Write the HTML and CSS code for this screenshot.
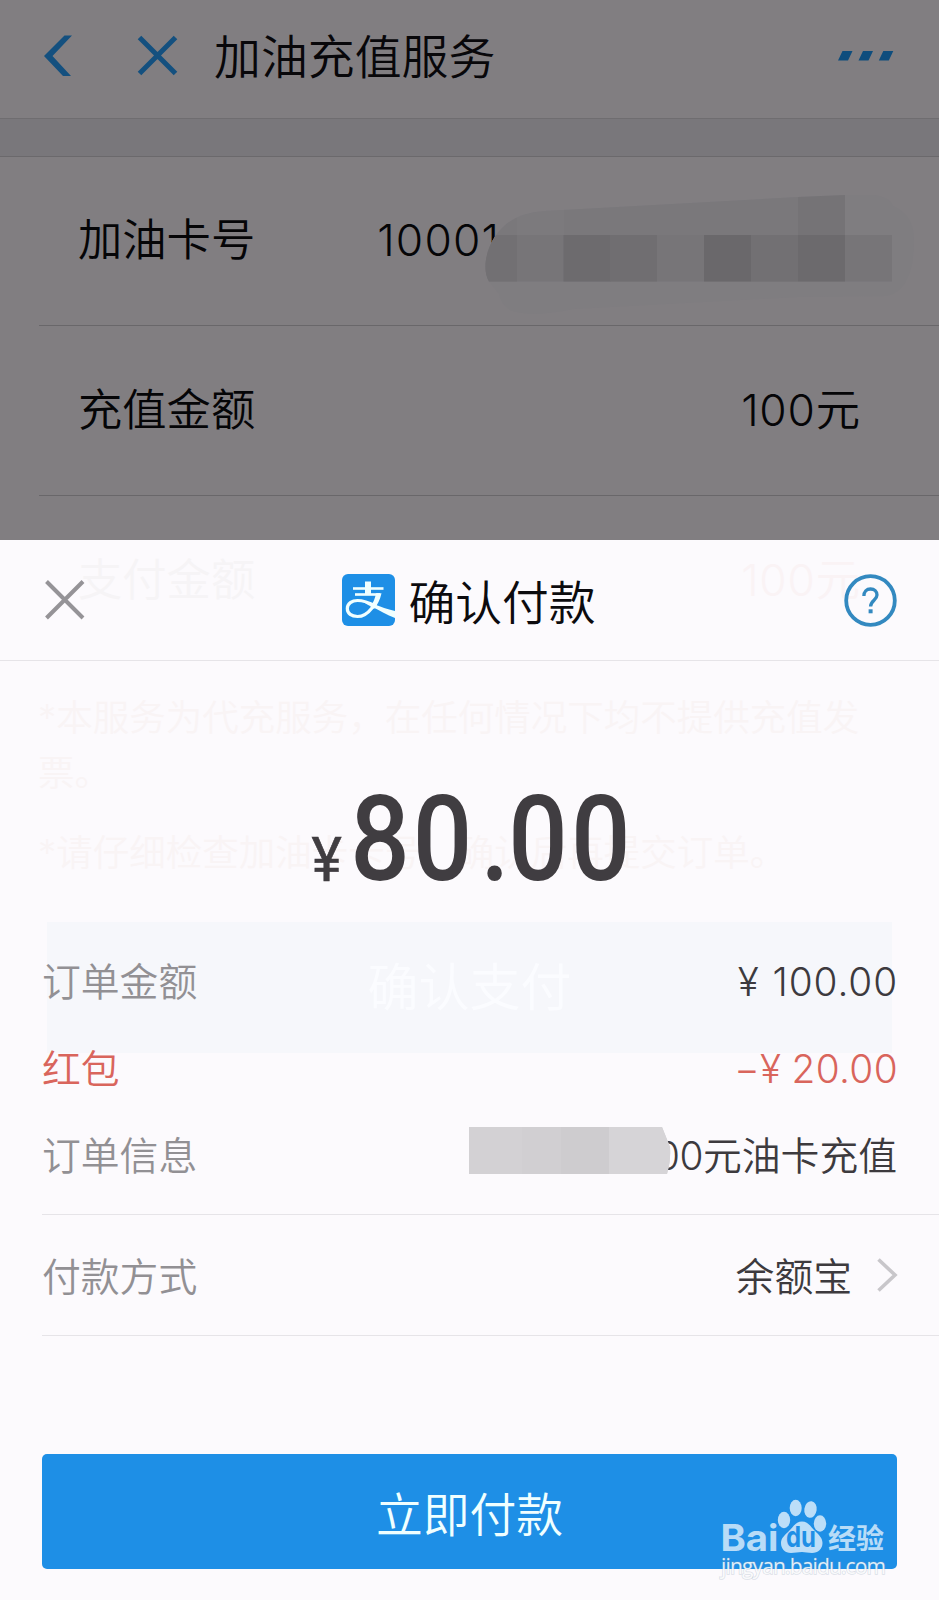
FILE: index.html
```html
<!DOCTYPE html>
<html lang="zh-CN">
<head>
<meta charset="utf-8">
<title>加油充值服务</title>
<link rel="stylesheet" href="styles.css">
</head>
<body>
<div class="screen">
  <div class="page">
    <header class="navbar">
      <svg class="back" width="30" height="42" viewBox="0 0 30 42"><path d="M20.500 .5H28L8.500 21L27 41H19L0 21Z"/></svg>
      <svg class="close" width="42" height="42" viewBox="0 0 42 42"><path d="M2.500 2.500L38.500 38.500M38.500 2.500L2.500 38.500"/></svg>
      <h1 class="title">加油充值服务</h1>
      <svg class="more" width="56" height="10" viewBox="0 0 56 10"><path d="M4.500 0h10l-4.500 9.500H0zM25 0h10l-4.500 9.500h-10zM45.300 0h10l-4.500 9.500h-10z"/></svg>
    </header>
    <div class="band"></div>
    <div class="field">
      <span>加油卡号</span>
      <span class="card-no">10001</span>
      <svg class="mosaic-card" width="450" height="150" viewBox="470 180 450 150">
        <clipPath id="blob"><path d="M489 281.500C481 268 487 243 502 228Q516 213 545 211L798 197L845 195L873 195Q890 197 893 206Q914 215 914 240Q914 290 887 296L798 297L574 309Q530 318 510 310Q500 303 499 294Z"/></clipPath>
        <g clip-path="url(#blob)">
          <rect x="470" y="180" width="450" height="150" fill="#7f7d80"/>
          <rect x="470" y="180" width="47" height="55" fill="#7a787b"/>
          <rect x="517" y="180" width="47" height="55" fill="#7c7a7d"/>
          <rect x="564" y="180" width="234" height="55" fill="#7a787b"/>
          <rect x="798" y="180" width="47" height="55" fill="#757376"/>
          <rect x="470" y="235" width="422" height="46.500" fill="#777578"/>
          <rect x="470" y="235" width="47" height="46.500" fill="#727073"/>
          <rect x="563.500" y="235" width="47" height="46.500" fill="#6d6b6e"/>
          <rect x="610" y="235" width="47" height="46.500" fill="#706e71"/>
          <rect x="704" y="235" width="47" height="46.500" fill="#6a686b"/>
          <rect x="751" y="235" width="47" height="46.500" fill="#727073"/>
          <rect x="798" y="235" width="47" height="46.500" fill="#6c6a6d"/>
        </g>
      </svg>
    </div>
    <div class="field">
      <span>充值金额</span>
      <span class="value"><span class="num">100</span>元</span>
    </div>
  </div>

  <section class="sheet">
    <div class="under">
      <div class="under-row"><span>支付金额</span><span class="under-sum"><span class="num">100</span>元</span></div>
      <p class="under-note">*本服务为代充服务，在任何情况下均不提供充值发<br>票。</p>
      <p class="under-note">*请仔细检查加油卡卡号，确认后再提交订单。</p>
      <div class="under-button">确认支付</div>
    </div>

    <header class="sheet-head">
      <svg width="42" height="42" viewBox="0 0 42 42"><path d="M2.500 2.500L39 39M39 2.500L2.500 39" fill="none" stroke="#959397" stroke-width="4"/></svg>
      <div class="brand">
        <svg width="53" height="52" viewBox="0 0 53 52">
          <rect width="53" height="52" rx="6" fill="#1e8fe6"/>
          <g fill="none" stroke="#f0ffff">
            <path d="M11 14.500H41.500" stroke-width="2.600"/>
            <path d="M26 7.500V20" stroke-width="6"/>
            <path d="M13 20.500H38" stroke-width="2.600"/>
            <path d="M36.500 19.500C35 28 27 42.500 15.500 42.500C9.500 42.500 5.300 39.500 5.300 34.500C5.300 29.500 10 26.500 15.500 26.500C21 26.500 28 29 34 32" stroke-width="3.200"/>
          </g>
          <path d="M19 26C28 28 37 33 53 37V44C45 41 37 36 29 32.500C25 30.500 22 28.500 19 26Z" fill="#f0ffff"/>
          <path d="M34 19.300H39.500C38 26 35.500 31 32 35L28.500 32.500C31.500 28.500 33 24.500 34 19.300Z" fill="#f0ffff"/>
        </svg>
        <h2>确认付款</h2>
      </div>
      <svg width="53" height="53" viewBox="0 0 53 53" fill="none" stroke="#3389c0">
        <circle cx="26.500" cy="26.500" r="24.300" stroke-width="3.800"/>
        <path d="M19.900 22C19.900 17.500 22.600 15 26.500 15C30.500 15 33 17.500 33 21C33 26 26.600 26.500 26.600 32.500" stroke-width="3.300"/>
        <path d="M26.600 35.300V39.300" stroke-width="4"/>
      </svg>
    </header>

    <div class="amount">
      <svg width="320" height="110" viewBox="310 780 320 110" fill="#403d41">
        <text class="yen" transform="translate(311.500 880.500) scale(.93 1)">¥</text>
        <g transform="scale(.88 1)"><text class="sum" x="398 469 546 577.500 649" y="880">80.00</text></g>
      </svg>
    </div>

    <dl class="details">
      <div class="line"><dt>订单金额</dt><dd class="num">¥ 100.00</dd></div>
      <div class="line discount"><dt>红包</dt><dd class="num">−¥ 20.00</dd></div>
      <div class="line">
        <dt>订单信息</dt><dd><span class="tight">00</span>元油卡充值</dd>
        <svg class="mosaic-order" width="202" height="47" viewBox="0 0 202 47">
          <path d="M0 0H193L201 20Q202 34 198 47H0Z" fill="#d3d1d4"/>
          <path d="M53 0H92V47H53Z" fill="#d1cfd2"/>
          <path d="M92 0H140V47H92Z" fill="#cecccf"/>
          <path d="M140 0H193L201 20Q202 34 198 47H140Z" fill="#d6d4d7"/>
        </svg>
      </div>
    </dl>

    <div class="method">
      <span class="method-label">付款方式</span>
      <span class="method-value">余额宝</span>
      <svg width="21" height="34" viewBox="0 0 21 34"><path d="M1.500 1.500L18 17L1.500 32.500" fill="none" stroke="#c8c6ca" stroke-width="3.600"/></svg>
    </div>

    <button class="pay">立即付款</button>

    <svg class="watermark" width="180" height="90" viewBox="715 1495 180 90">
      <g fill="#fff" fill-opacity=".7">
        <text class="wm-bai" x="720.500" y="1551" textLength="58" lengthAdjust="spacingAndGlyphs">Bai</text>
        <ellipse cx="784" cy="1520" rx="6.200" ry="8.300"/>
        <ellipse cx="795.700" cy="1508" rx="6" ry="8.300"/>
        <ellipse cx="810.500" cy="1509.500" rx="6.200" ry="8.300" transform="rotate(8 810.500 1509.500)"/>
        <ellipse cx="820" cy="1523.500" rx="6.200" ry="8.300"/>
        <path d="M802 1521.500C808 1521.500 811 1527 815 1531C819 1535 822.500 1538 822.500 1543C822.500 1549 818 1553 812 1553C808 1553 805 1552 802 1552C798 1552 795 1553 791 1553C785 1553 781 1549 781 1543C781 1538 785 1535 789 1531C793 1527 796 1521.500 802 1521.500Z"/>
        <text class="wm-cn" x="828" y="1549" textLength="56">经验</text>
      </g>
      <text class="wm-du" x="786" y="1547" textLength="30" lengthAdjust="spacingAndGlyphs">du</text>
      <text class="wm-url" x="721" y="1574" textLength="165">jingyan.baidu.com</text>
    </svg>
  </section>
</div>
</body>
</html>
```
FILE: styles.css
```css
* { box-sizing: border-box; }
body, h1, h2, p, dl, dd { margin: 0; font-weight: 350; }

body {
  width: 939px;
  font-family: "Inter", "Noto Sans CJK SC", sans-serif;
  font-weight: 350;
}

.screen {
  position: relative;
  width: 939px;
  height: 1600px;
  overflow: hidden;
  background: #817e81;
}

/* dimmed page */
.navbar {
  display: flex;
  align-items: center;
  height: 119px;
  padding: 0 45px 7px 44px;
  border-bottom: 1px solid #6f6d70;
}
.back { fill: #14507f; }
.close { margin-left: 63px; fill: none; stroke: #14507f; stroke-width: 5; }
.more { margin-left: auto; fill: #0e4d7d; }
.title {
  margin-left: 35px;
  padding-top: 2px;
  font-size: 46.9px;
  line-height: 60px;
  color: #08070a;
}
.band { height: 38px; background: #79777b; border-bottom: 1px solid #6b696c; }
.field {
  position: relative;
  display: flex;
  align-items: center;
  height: 169px;
  margin-left: 39px;
  padding: 0 79px 2px 39px;
  border-bottom: 1px solid #69676a;
  font-size: 44.3px;
  line-height: 60px;
  color: #050507;
}
.field:last-child { height: 170px; }
.card-no { margin-left: 122px; font-weight: 300; letter-spacing: 1.2px; }
.value { margin-left: auto; }
.value .num, .under-sum .num { font-weight: 300; letter-spacing: .8px; }
.mosaic-card { position: absolute; left: 431px; top: 23px; }

/* payment sheet */
.sheet {
  position: absolute;
  left: 0;
  top: 540px;
  width: 939px;
  height: 1060px;
  background: #fcfafd;
}
.sheet > * { position: relative; }

/* page content faintly showing through the sheet */
.sheet > .under { position: absolute; inset: 0; color: #f6f4f6; }
.under-row {
  display: flex;
  justify-content: space-between;
  padding: 10px 79px 0 78px;
  font-size: 44.3px;
  line-height: 60px;
}
.under-sum { color: #faf3f5; }
.under-note {
  margin: 81px 0 0 38px;
  font-size: 36.5px;
  line-height: 55px;
  color: #f9f4f5;
  white-space: nowrap;
}
.under-note + .under-note { margin-top: 25px; }
.under-button {
  width: 845px;
  height: 131px;
  margin: 41px 0 0 47px;
  background: #f6f7fb;
  color: #fbfcff;
  font-size: 51px;
  line-height: 132px;
  text-align: center;
}

.sheet > .sheet-head {
  display: flex;
  align-items: center;
  justify-content: space-between;
  height: 121px;
  padding: 0 42px 0 44px;
  border-bottom: 1px solid #e6e4e8;
}
.brand { display: flex; align-items: center; gap: 13px; margin-left: 8px; }
.brand h2 { padding-top: 5px; font-size: 46.8px; line-height: 60px; color: #0c0b0e; }

.sheet > .amount { height: 276px; padding: 119px 0 0 310px; }
.amount svg { display: block; overflow: visible; }
.yen { font: 400 62px Roboto, sans-serif; stroke: #403d41; stroke-width: .6px; }
.sum { font: 500 119px Roboto, sans-serif; }

.details { height: 278px; padding: 1px 42px 0 42px; }
.sheet > .details::after {
  content: "";
  display: block;
  height: 1px;
  margin: 15px -42px 0 0;
  background: #e6e4e8;
}
.line {
  position: relative;
  display: flex;
  justify-content: space-between;
  align-items: center;
  height: 87px;
  padding-top: 1px;
  font-size: 38.8px;
  line-height: 60px;
  color: #3d3a3e;
}
.line dt { color: #929094; }
.line dd.num { margin-right: -1px; letter-spacing: .9px; word-spacing: 1px; }
.line.discount .num { letter-spacing: .35px; word-spacing: -1px; }
.tight { letter-spacing: -.5px; }
.line.discount, .line.discount dt { color: #d9655c; }
.mosaic-order { position: absolute; left: 427px; top: 15px; }

.method {
  display: flex;
  align-items: center;
  height: 121px;
  margin-left: 42px;
  padding-right: 41px;
  border-bottom: 1px solid #e6e4e8;
  font-size: 38.8px;
  line-height: 60px;
}
.method-label { padding-top: 3px; color: #929094; }
.method-value { margin: 0 25px 0 auto; padding-top: 3px; color: #3d3a3e; }

.pay {
  display: block;
  width: 855px;
  height: 115px;
  margin: 118px 0 0 42px;
  padding: 6px 0 0;
  border: 0;
  border-radius: 5px;
  background: #1e8fe6;
  color: #f0ffff;
  font: 350 46.8px/60px "Inter", "Noto Sans CJK SC", sans-serif;
}

.sheet > .watermark { position: absolute; left: 715px; top: 955px; overflow: visible; }
.wm-bai { font: 700 37px "Inter", sans-serif; }
.wm-du { font: 700 29px "Inter", sans-serif; fill: #1e8fe6; }
.wm-cn { font: 700 28px "Noto Sans CJK SC", sans-serif; }
.wm-url {
  font: 400 21px "Open Sans", sans-serif;
  fill: #fff;
  fill-opacity: .85;
  paint-order: stroke;
  stroke: #8aa0b4;
  stroke-opacity: .3;
  stroke-width: 1.5px;
}
```
